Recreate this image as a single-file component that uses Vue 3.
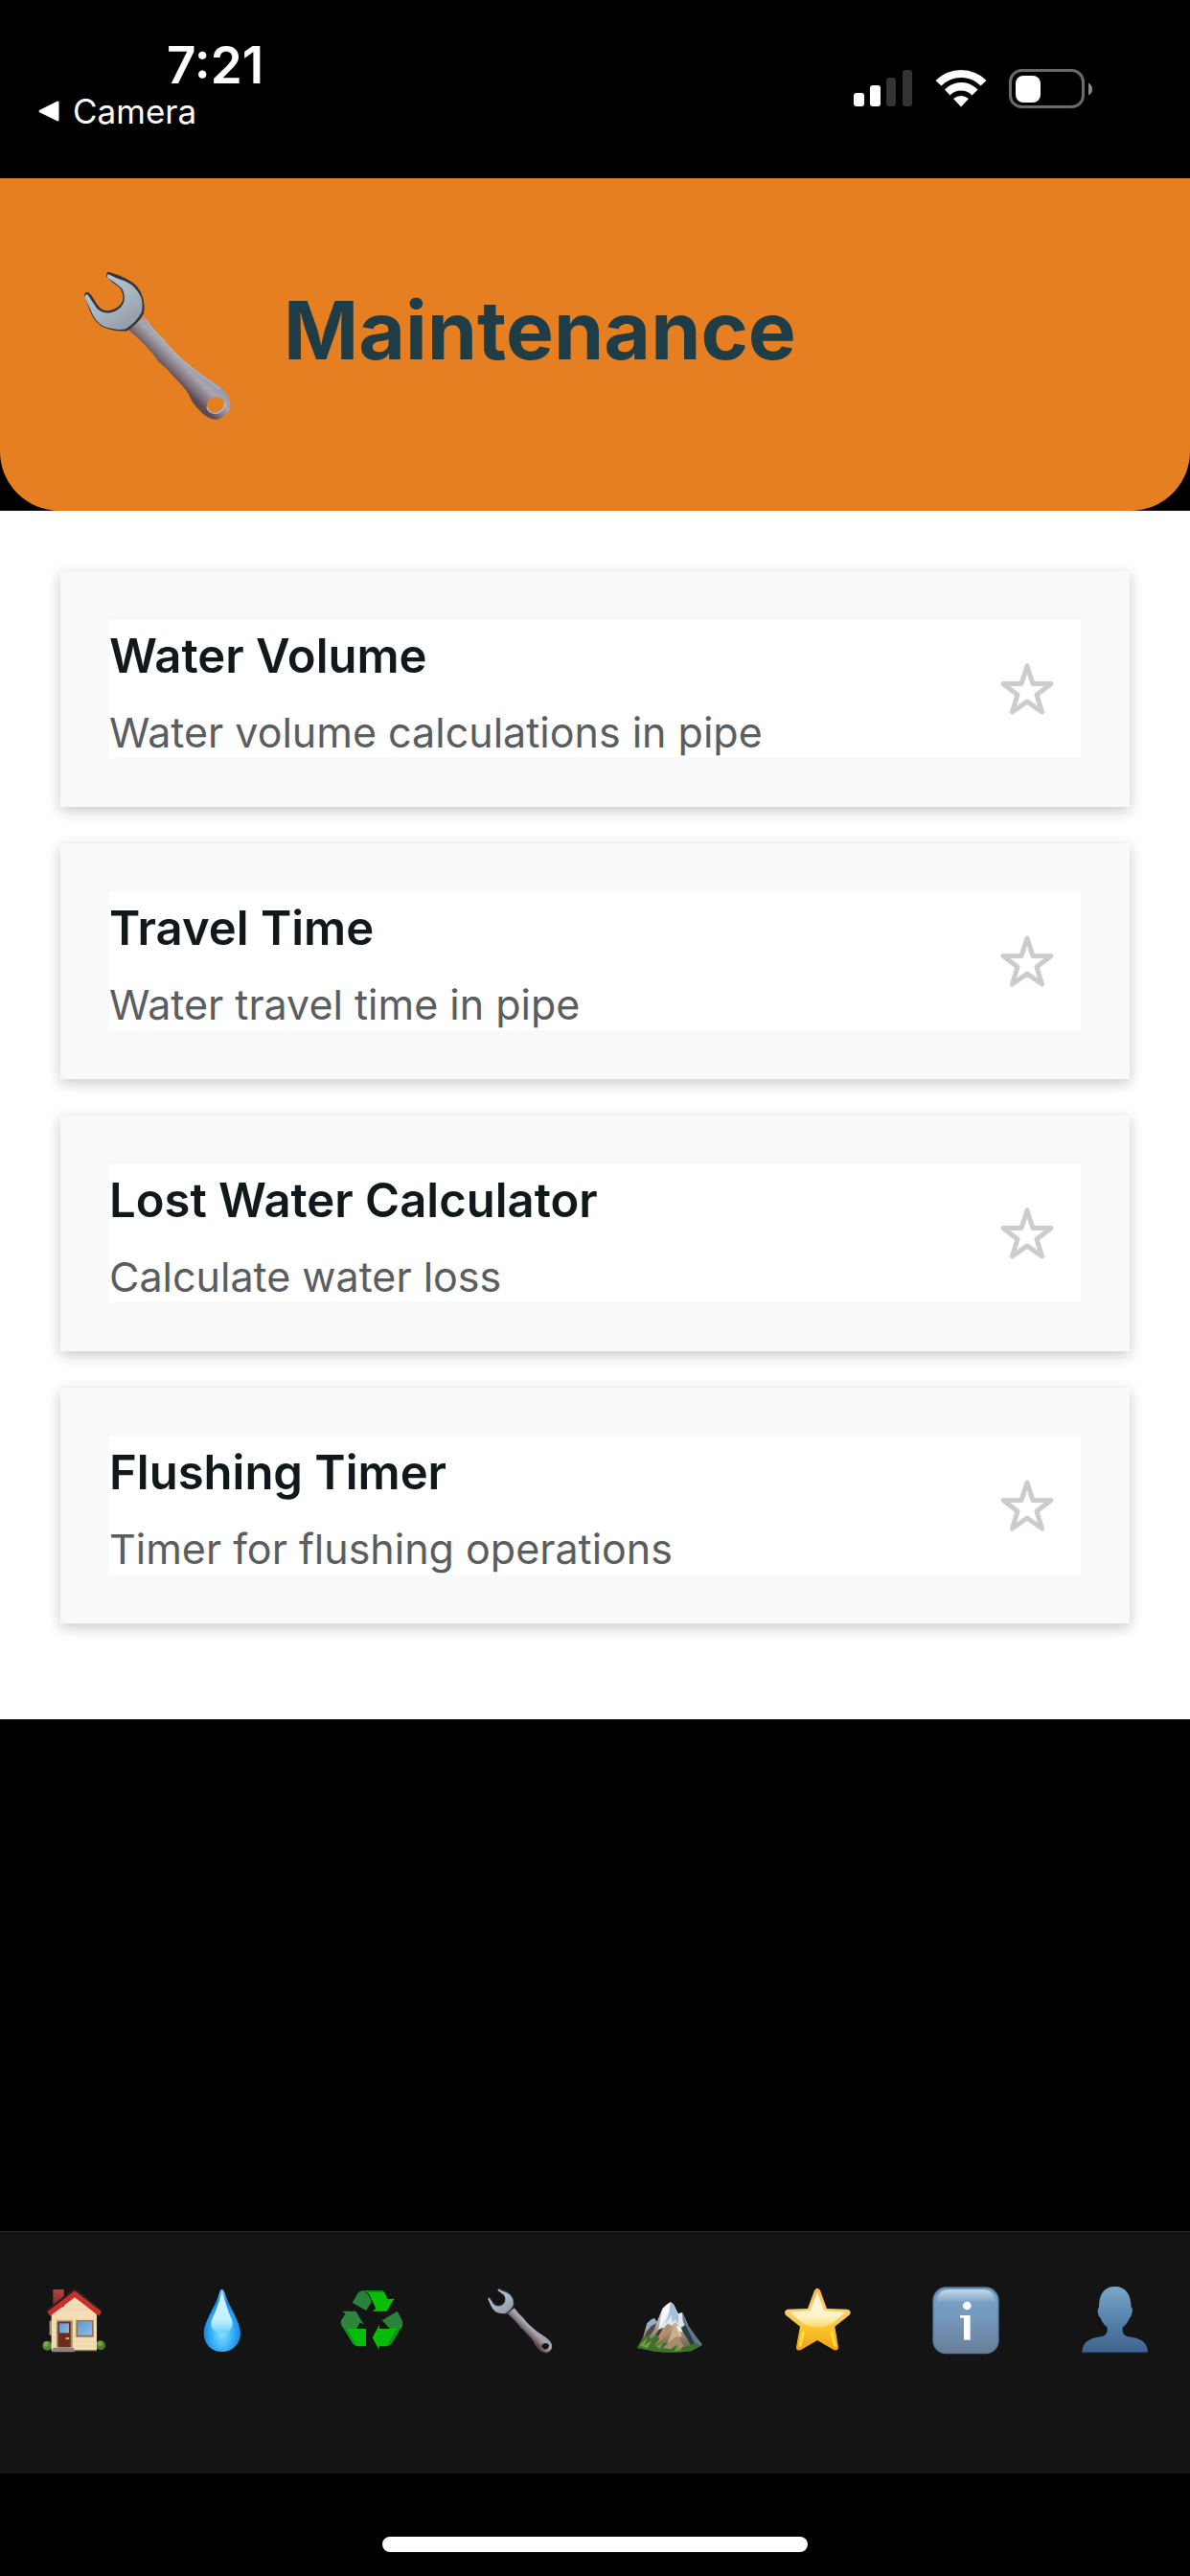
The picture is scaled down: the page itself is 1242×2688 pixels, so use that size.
<!-- MaintenanceScreen.vue -->
<template>
  <div class="screen">
    <div class="status-bar">
      <div class="status-left">
        <span class="time">7:21</span>
        <a class="back-link" href="#camera">
          <svg class="back-arrow" viewBox="0 0 22 22">
            <path d="M1.5 9.8 L19.5 0.8 Q21.5 0 21.5 2 V20 Q21.5 22 19.5 21.2 L1.5 12.2 Q-0.6 11 1.5 9.8Z" fill="#fff" />
          </svg>
          Camera
        </a>
      </div>
      <div class="status-right">
        <svg class="signal" viewBox="0 0 62 40">
          <rect x="0" y="25" width="11" height="14" rx="3" fill="#fff" />
          <rect x="17" y="17" width="11" height="22" rx="3" fill="#fff" />
          <rect x="34" y="9" width="10" height="30" rx="3" fill="#333" />
          <rect x="51" y="1" width="10" height="38" rx="3" fill="#333" />
        </svg>
        <svg class="wifi" viewBox="0 0 54 40" fill="#fff">
          <path d="M0.5 12 Q12 1 27 1 Q42 1 53.5 12 L47.5 17.5 Q39 9 27 9 Q15 9 6.5 17.5Z" />
          <path d="M10 21.5 Q17 14 27 14 Q37 14 44.5 21.5 L38.5 27.5 Q34 22.5 27 22.5 Q20 22.5 15.5 27.5Z" />
          <path d="M19 31 Q23 28 27 28 Q31 28 35 31 L27 39.5Z" />
        </svg>
        <svg class="battery" viewBox="0 0 88 42">
          <rect x="1.5" y="1.5" width="76" height="38" rx="12" fill="none" stroke="#6b6b6b" stroke-width="3" />
          <rect x="7" y="7" width="26" height="28" rx="8" fill="#fff" />
          <path d="M83 14.5 Q87 16.5 87 21 Q87 25.5 83 27.5Z" fill="#8a8a8a" />
        </svg>
      </div>
    </div>

    <header class="header">
      <svg class="header-icon" viewBox="38 29 491 491">
        <defs>
          <linearGradient id="wrenchHead" x1="0" y1="0" x2="0.7" y2="1">
            <stop offset="0" stop-color="#b9c8d7" />
            <stop offset="0.6" stop-color="#a9b5c2" />
            <stop offset="1" stop-color="#979ca8" />
          </linearGradient>
          <linearGradient id="wrenchHandle" gradientUnits="userSpaceOnUse" x1="375" y1="305" x2="320" y2="360">
            <stop offset="0" stop-color="#969aa8" />
            <stop offset="0.35" stop-color="#aaa6b0" />
            <stop offset="0.7" stop-color="#857a83" />
            <stop offset="1" stop-color="#5f4a4f" />
          </linearGradient>
          <g id="wrenchShape">
            <path
              fill-rule="evenodd"
              d="M190 220 L242 180 Q262 215 300 248 Q330 290 375 325 Q400 350 435 370 Q460 385 480 402 Q510 425 510 455 Q506 490 470 501 Q440 504 412 472 Q388 450 378 420 Q362 395 335 370 Q310 340 285 320 Q255 275 190 220Z M462 431 C445 431 434 447 437 461 C441 475 453 480 464 477 C481 474 491 460 489 448 C487 437 475 430 462 431Z"
              fill="url(#wrenchHandle)"
            />
            <path d="M245 188 Q265 222 302 256 Q335 298 378 332 Q435 375 478 408" fill="none" stroke="#b9bdca" stroke-width="5" opacity="0.6" />
            <path d="M436 462 Q442 482 464 482 Q492 476 494 447" fill="none" stroke="#bdb5ba" stroke-width="5" />
            <path
              d="M128 40 Q165 50 185 62 Q226 82 236 120 Q243 148 239 170 Q220 205 185 225 Q145 228 108 211 Q80 190 70 160 Q60 135 53 115 Q55 100 65 104 Q74 110 82 124 Q90 139 100 150 Q112 163 130 161 Q162 155 173 130 Q177 108 164 90 Q142 75 123 56 Q120 42 128 40Z"
              fill="#30343c"
            />
            <path
              d="M126 46 Q155 62 183 70 Q214 84 231 120 Q237 142 232 166 Q214 200 181 219 Q145 224 110 209 Q84 190 73 160 Q63 138 54 120 Q56 108 64 111 Q76 130 93 155 Q112 171 132 168 Q164 163 176 136 Q183 112 170 91 Q148 72 125 58Z"
              fill="url(#wrenchHead)"
            />
          </g>
        </defs>
        <use href="#wrenchShape" />
      </svg>
      <h1>Maintenance</h1>
    </header>

    <main class="content">
      <article v-for="tool in tools" :key="tool.title" class="card">
        <div class="card-body">
          <div class="card-text">
            <h2>{{ tool.title }}</h2>
            <p>{{ tool.description }}</p>
          </div>
          <button
            class="favorite"
            :class="{ active: tool.favorite }"
            :aria-label="'Favorite ' + tool.title"
            :aria-pressed="tool.favorite"
            @click="toggleFavorite(tool)"
          >
            <svg viewBox="0 0 60 60">
              <path d="M30 6 L36 24.5 H55 L40 36 L45.5 54 L30 43 L14.5 54 L20 36 L5 24.5 H24Z" />
            </svg>
          </button>
        </div>
      </article>
    </main>

    <nav class="tab-bar">
      <button
        v-for="tab in tabs"
        :key="tab.name"
        class="tab"
        :aria-label="tab.name"
        @click="activeTab = tab.name"
      >
        <svg :viewBox="tab.box">
          <g v-if="tab.name === 'Home'">
            <linearGradient id="chimney" x1="0" y1="0" x2="0" y2="1">
              <stop offset="0" stop-color="#b8453f" />
              <stop offset="1" stop-color="#7a241f" />
            </linearGradient>
            <linearGradient id="windowPane" x1="0" y1="0" x2="1" y2="1">
              <stop offset="0" stop-color="#5e9bd0" />
              <stop offset="1" stop-color="#8fbce2" />
            </linearGradient>
            <path d="M154 335 H160 V380 H154Z" fill="#a89880" />
            <circle cx="147" cy="413" r="15" fill="#55852f" />
            <circle cx="143" cy="408" r="8" fill="#7ba74b" />
            <circle cx="314" cy="412" r="15" fill="#4d7d2b" />
            <circle cx="312" cy="406" r="8" fill="#75a246" />
            <path d="M160 315 L233 256 L302 315 V428 H160Z" fill="#f1deb4" />
            <path d="M160 330 H302 M160 345 H302 M160 372 H302 M160 386 H302 M160 400 H302 M160 414 H302 M180 300 H285 M198 286 H268" stroke="#dfc99a" stroke-width="1.5" />
            <rect x="165" y="237" width="34" height="55" fill="url(#chimney)" />
            <path d="M143 303 L222 240 Q233 232 244 240 L318 300 L314 310 L233 252 L150 312Z" fill="#262022" />
            <path d="M147 307 L233 241 L317 307 L309 320 L233 262 L156 320Z" fill="#c9302d" />
            <rect x="176" y="334" width="50" height="84" fill="#a18463" />
            <rect x="181" y="338" width="39" height="80" fill="#6c2c20" />
            <rect x="185" y="343" width="30" height="30" fill="url(#windowPane)" />
            <rect x="204" y="387" width="12" height="7" rx="3" fill="#e0a93c" />
            <rect x="237" y="333" width="55" height="53" fill="#8a735a" />
            <rect x="242" y="337" width="45" height="43" fill="url(#windowPane)" />
            <path d="M166 419 H230 L234 433 H161Z" fill="#8c8280" />
            <path d="M234 426 H302 V430 H234Z" fill="#8e7d62" />
          </g>

          <g v-else-if="tab.name === 'Water'">
            <radialGradient id="dropBody" cx="0.5" cy="0.68" r="0.62">
              <stop offset="0" stop-color="#8fe4ff" />
              <stop offset="0.45" stop-color="#3bb4fb" />
              <stop offset="0.8" stop-color="#1788e2" />
              <stop offset="1" stop-color="#55c0f5" />
            </radialGradient>
            <linearGradient id="dropShine" x1="0" y1="0" x2="0" y2="1">
              <stop offset="0" stop-color="#d8f3ff" />
              <stop offset="0.7" stop-color="#c2f0ff" />
              <stop offset="1" stop-color="#69cdfc" />
            </linearGradient>
            <path d="M695 236 C700 236 703 245 706 254 C718 292 753 338 753 374 C753 408 727 432 695 432 C663 432 638 408 638 374 C638 338 673 292 685 254 C688 245 690 236 695 236Z" fill="url(#dropBody)" />
            <path d="M695 242 C706 275 712 302 725 330 C734 354 722 372 695 374 C666 372 655 354 664 330 C678 302 686 275 695 242Z" fill="url(#dropShine)" />
          </g>

          <g v-else-if="tab.name === 'Recycling'">
            <path d="M205 241 Q192 243 187 254 L173 279 L217 303 L234 276 Q226 248 205 241Z" fill="#28813a" />
            <path d="M205 240 H264 Q270 240 273 246 L284 267 L304 266 L281 305 H236 L247 297 L229 258 Q222 244 205 240Z" fill="#08c008" />
            <path d="M205 240 H264 L272 246 H222Z" fill="#0a8a12" />
            <path d="M140 305 H184 L209 346 L197 341 L186 360 H147 Q133 346 138 334 L152 313Z" fill="#2d8540" />
            <path d="M140 348 Q144 359 156 360 H216 V415 H189 Q180 414 174 405Z" fill="#07bd0a" />
            <path d="M140 348 L174 405 Q180 414 189 415 L156 360Z" fill="#0b9717" />
            <path d="M314 305 L329 333 Q334 347 326 360 H291 L266 334Z" fill="#2b823c" />
            <path d="M258 347 V360 H311 Q325 359 330 349 L297 405 Q291 414 281 415 H257 V427 L236 388Z" fill="#07bd0a" />
            <path d="M330 349 L297 405 Q291 414 281 415 L311 360 Q325 359 330 349Z" fill="#0b9717" />
          </g>

          <use v-else-if="tab.name === 'Maintenance'" href="#wrenchShape" />

          <g v-else-if="tab.name === 'Terrain'">
            <linearGradient id="rock" x1="0" y1="0" x2="0" y2="1">
              <stop offset="0" stop-color="#e6edf5" />
              <stop offset="0.4" stop-color="#b9b3ab" />
              <stop offset="0.75" stop-color="#8d7660" />
              <stop offset="1" stop-color="#3f6a31" />
            </linearGradient>
            <path d="M134 420 L152 388 L164 345 Q176 330 188 328 L196 338 L213 297 Q226 284 238 277 L248 284 L262 313 L275 310 L285 330 L295 352 L316 382 L338 410 L303 430 Q250 438 190 431Z" fill="url(#rock)" />
            <path d="M164 345 Q176 330 188 328 L194 342 L178 352 L167 372Z" fill="#8eb1cf" />
            <path d="M213 297 Q226 284 238 277 L248 284 L262 313 L275 310 L285 330 L298 362 L283 348 L268 355 L253 340 L242 351 L230 344 L210 366 L196 382 L204 345Z" fill="#dfe7f0" />
            <path d="M238 277 L234 315 L220 345 L242 318 L244 340 L253 330 L262 346 L264 320 L248 284Z" fill="#a8bfda" />
            <path d="M238 279 L233 305 L214 340 L204 352 L215 300Z" fill="#f7f9fc" />
            <path d="M275 310 L285 330 L295 352 L316 382 L338 410 L303 430 L294 400 L277 368 L290 372 L277 335Z" fill="#5f7590" />
            <path d="M285 348 L312 402 L324 415 L306 422 L292 392 L270 360Z" fill="#2c3f38" />
            <path d="M242 351 L232 374 L210 395 L188 412 L206 371 L230 344Z" fill="#b28e6b" />
            <path d="M164 368 L178 352 L194 342 L188 362 L169 388 L150 405Z" fill="#4f4a48" />
            <path d="M202 362 L216 356 L198 388 L182 402 L190 380Z" fill="#3e3a37" />
            <path d="M253 344 L268 358 L274 385 L252 388 L228 408 L238 382Z" fill="#d3ad85" />
            <path d="M256 350 L270 353 L277 372 L266 366 L270 386Z" fill="#e6edf5" />
            <path d="M134 420 L152 388 L168 380 L178 392 L196 376 L204 394 L188 412 L224 404 L238 412 L262 400 L282 418 L316 405 L334 411 L303 430 Q250 438 190 431Z" fill="#416f2c" />
            <path d="M252 388 L262 384 L280 414 L268 426 L258 410 L240 424 L214 420 L228 408Z" fill="#a68c70" />
            <path d="M142 412 L166 388 L156 412 L180 396 L166 422Z M192 414 L214 406 L204 424Z M258 414 L272 428 L250 430Z" fill="#6f9d46" />
          </g>

          <g v-else-if="tab.name === 'Favorites'">
            <linearGradient id="starFill" x1="0" y1="0" x2="0" y2="1">
              <stop offset="0" stop-color="#f6b550" />
              <stop offset="0.35" stop-color="#f9cf76" />
              <stop offset="0.65" stop-color="#fcc52c" />
              <stop offset="1" stop-color="#f0a01c" />
            </linearGradient>
            <linearGradient id="starShine" x1="0" y1="0" x2="0" y2="1">
              <stop offset="0" stop-color="#fff9e6" />
              <stop offset="0.7" stop-color="#fff2c4" />
              <stop offset="1" stop-color="#fbd968" />
            </linearGradient>
            <path d="M690 240 Q699 226 708 240 L729 297 L792 299 Q808 303 801 316 L754 353 L765 417 Q764 432 750 426 L699 396 L647 427 Q632 431 633 416 L645 353 L600 317 Q592 303 606 299 L669 297Z" fill="url(#starFill)" />
            <path d="M699 246 L721 304 L786 308 L745 344 Q700 366 655 344 L613 308 L677 304Z" fill="url(#starShine)" />
            <path d="M645 412 L655 372 M754 412 L744 372" stroke="#ffdf45" stroke-width="9" stroke-linecap="round" />
          </g>

          <g v-else-if="tab.name === 'Info'">
            <linearGradient id="infoFill" x1="0" y1="0" x2="0" y2="1">
              <stop offset="0" stop-color="#7da4c6" />
              <stop offset="0.45" stop-color="#7399bd" />
              <stop offset="1" stop-color="#697e99" />
            </linearGradient>
            <linearGradient id="infoShine" x1="0" y1="0" x2="0" y2="1">
              <stop offset="0" stop-color="#c3d9ea" />
              <stop offset="1" stop-color="#7da4c6" />
            </linearGradient>
            <rect x="130" y="229" width="208" height="210" rx="42" fill="#56789b" />
            <rect x="134" y="233" width="200" height="202" rx="39" fill="url(#infoFill)" />
            <path d="M144 276 Q144 238 182 238 H288 Q324 238 326 276Z" fill="url(#infoShine)" />
            <circle cx="238" cy="288" r="13" fill="#fff" />
            <rect x="228" y="318" width="20" height="77" fill="#fff" />
            <rect x="216" y="318" width="20" height="8" fill="#fff" />
          </g>

          <g v-else>
            <linearGradient id="personFill" x1="0" y1="0" x2="0" y2="1">
              <stop offset="0" stop-color="#78a8c9" />
              <stop offset="0.55" stop-color="#547fa9" />
              <stop offset="1" stop-color="#40638e" />
            </linearGradient>
            <path d="M702 228 C736 228 752 252 753 293 Q760 298 755 311 Q754 322 748 326 Q740 346 726 355 V368 Q728 380 745 385 Q772 388 790 400 Q804 411 805 435 H599 Q600 411 614 400 Q630 388 658 385 Q676 380 678 368 V355 Q664 346 657 326 Q650 322 649 311 Q646 298 652 293 C652 252 668 228 702 228Z" fill="url(#personFill)" />
            <path d="M599 432 H805 V436 H599Z" fill="#26406b" />
          </g>
        </svg>
      </button>
    </nav>

    <div class="home-area">
      <div class="home-indicator"></div>
    </div>
  </div>
</template>

<script setup>
import { ref } from 'vue'

const tools = ref([
  { title: 'Water Volume', description: 'Water volume calculations in pipe', favorite: false },
  { title: 'Travel Time', description: 'Water travel time in pipe', favorite: false },
  { title: 'Lost Water Calculator', description: 'Calculate water loss', favorite: false },
  { title: 'Flushing Timer', description: 'Timer for flushing operations', favorite: false },
])

const tabs = [
  { name: 'Home', box: '125 228 216 216' },
  { name: 'Water', box: '591 228 216 216' },
  { name: 'Recycling', box: '126 228 216 216' },
  { name: 'Maintenance', box: '38 29 491 491' },
  { name: 'Terrain', box: '128 228 216 216' },
  { name: 'Favorites', box: '594 228 216 216' },
  { name: 'Info', box: '129 228 216 216' },
  { name: 'Profile', box: '595 228 216 216' },
]

const activeTab = ref('Maintenance')

const toggleFavorite = (tool) => {
  tool.favorite = !tool.favorite
}
</script>

<style>
body {
  margin: 0;
  background: #000;
}
</style>

<style scoped>
.screen {
  display: flex;
  flex-direction: column;
  min-height: 100vh;
  background: #000;
  font-family: Inter, 'Liberation Sans', sans-serif;
}

button {
  padding: 0;
  border: none;
  background: none;
  cursor: pointer;
}

svg {
  display: block;
}

.status-bar {
  display: flex;
  justify-content: space-between;
  box-sizing: border-box;
  height: 186px;
  padding: 40px 101px 0 40px;
  color: #fff;
}

.status-left {
  display: flex;
  flex-direction: column;
}

.time {
  padding-left: 134px;
  font-size: 53px;
  font-weight: 600;
  line-height: 56px;
}

.back-link {
  display: flex;
  align-items: center;
  gap: 14px;
  color: #fff;
  font-size: 35px;
  line-height: 40px;
  text-decoration: none;
}

.back-arrow {
  width: 22px;
  height: 22px;
}

.status-right {
  display: flex;
  gap: 23px;
  padding-top: 32px;
}

.signal {
  width: 62px;
  height: 40px;
}

.wifi {
  width: 54px;
  height: 40px;
}

.battery {
  width: 88px;
  height: 42px;
}

.header {
  display: flex;
  align-items: center;
  gap: 49px;
  padding: 94px 83px 89px;
  border-radius: 0 0 62px 62px;
  background: #e67e22;
}

.header-icon {
  flex: none;
  width: 164px;
  height: 164px;
}

.header h1 {
  margin: 0 0 34px;
  color: #1f3d47;
  font-size: 84px;
  font-weight: 700;
  line-height: 100px;
}

.content {
  display: flex;
  flex-direction: column;
  gap: 38px;
  padding: 63px 63px 100px;
  background: #fff;
}

.card {
  padding: 51px;
  background: #f8f9fb;
  box-shadow: 0 4px 14px rgba(0, 0, 0, 0.22);
}

.card-body {
  display: flex;
  align-items: center;
  justify-content: space-between;
  background: #fff;
}

.card h2 {
  margin: 0;
  padding-top: 6px;
  color: #11181c;
  font-size: 49px;
  font-weight: 600;
  line-height: 64px;
}

.card p {
  margin: 0;
  padding-top: 20px;
  color: #5a5d60;
  font-size: 43px;
  line-height: 54px;
}

.favorite {
  margin-right: 26px;
}

.favorite svg {
  width: 60px;
  height: 60px;
  fill: none;
  stroke: #ccc;
  stroke-width: 5;
  stroke-linejoin: round;
}

.favorite.active svg {
  fill: #ffc83d;
  stroke: #ffc83d;
}

.tab-bar {
  display: flex;
  box-sizing: border-box;
  height: 253px;
  margin-top: auto;
  padding-top: 57px;
  border-top: 1px solid #272729;
  background: #141414;
}

.tab {
  display: flex;
  flex: 1;
  align-items: flex-start;
  justify-content: center;
}

.tab svg {
  width: 72px;
  height: 72px;
}

.home-area {
  display: flex;
  justify-content: center;
  padding: 66px 0 25px;
}

.home-indicator {
  width: 444px;
  height: 16px;
  border-radius: 8px;
  background: #fff;
}
</style>
